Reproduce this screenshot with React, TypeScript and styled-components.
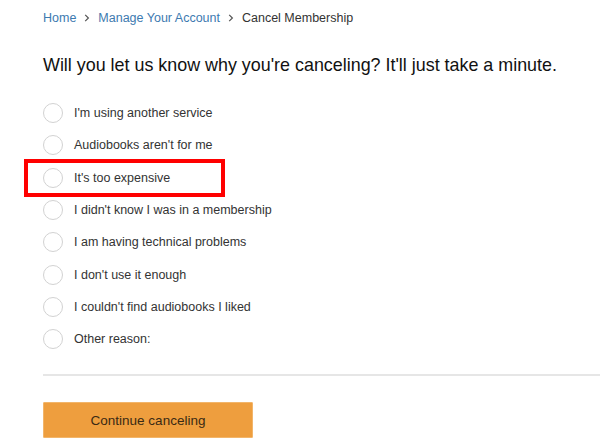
import React from "react";
import styled, { createGlobalStyle } from "styled-components";

const Global = createGlobalStyle`
  html, body { margin: 0; padding: 0; background: #fff; }
  body { font-family: "Liberation Sans", Arial, Helvetica, sans-serif; color: #333; }
`;

const Page = styled.div`
  width: 600px;
  height: 448px;
  overflow: hidden;
  padding: 10px 0 0 43px;
  box-sizing: border-box;
`;

const Crumbs = styled.nav`
  display: flex;
  align-items: center;
  gap: 8px;
  height: 16px;
  font-size: 12.5px;
`;

const CrumbLink = styled.span`
  color: #3d7ab0;
`;

const CrumbCurrent = styled.span`
  color: #333;
`;

const Chevron = styled.svg`
  width: 6px;
  height: 8px;
`;

const Heading = styled.h1`
  margin: 28px 0 0 0;
  font-size: 17.9px;
  font-weight: normal;
  color: #111;
  line-height: 22px;
`;

const Options = styled.div`
  display: flex;
  flex-direction: column;
  margin-top: 21px;
`;

const Row = styled.label`
  position: relative;
  display: flex;
  align-items: center;
  gap: 11px;
  height: 32.3px;
  font-size: 12.5px;
  color: #333;
`;

const Circle = styled.span`
  width: 20px;
  height: 20px;
  border-radius: 50%;
  border: 1px solid #d2d2d2;
  box-sizing: border-box;
  flex: none;
  background: #fff;
`;

const Highlight = styled.span`
  position: absolute;
  left: -19px;
  top: -3px;
  width: 201px;
  height: 38px;
  border: 4px solid #ff0000;
  box-sizing: border-box;
  pointer-events: none;
`;

const Divider = styled.hr`
  border: none;
  border-top: 2px solid #e6e6e6;
  margin: 19px 0 0 0;
`;

const Button = styled.button`
  margin-top: 26px;
  width: 210px;
  height: 36px;
  background: #ee9e3e;
  border: 1px solid #f2b56a;
  border-radius: 1px;
  font-family: "Liberation Sans", Arial, sans-serif;
  font-size: 13.5px;
  color: #3a2a14;
  display: flex;
  align-items: center;
  justify-content: center;
  padding: 0;
`;

const reasons = [
  "I'm using another service",
  "Audiobooks aren't for me",
  "It's too expensive",
  "I didn't know I was in a membership",
  "I am having technical problems",
  "I don't use it enough",
  "I couldn't find audiobooks I liked",
  "Other reason:",
];

const Sep = () => (
  <Chevron viewBox="0 0 6 8">
    <path d="M1.2 0.8 L4.4 4 L1.2 7.2" fill="none" stroke="#555" strokeWidth="1.2" />
  </Chevron>
);

export default function App() {
  return (
    <>
      <Global />
      <Page>
        <Crumbs>
          <CrumbLink>Home</CrumbLink>
          <Sep />
          <CrumbLink>Manage Your Account</CrumbLink>
          <Sep />
          <CrumbCurrent>Cancel Membership</CrumbCurrent>
        </Crumbs>
        <Heading>Will you let us know why you're canceling? It'll just take a minute.</Heading>
        <Options>
          {reasons.map((r, i) => (
            <Row key={r}>
              <Circle />
              {r}
              {i === 2 && <Highlight />}
            </Row>
          ))}
        </Options>
        <Divider />
        <Button>Continue canceling</Button>
      </Page>
    </>
  );
}
